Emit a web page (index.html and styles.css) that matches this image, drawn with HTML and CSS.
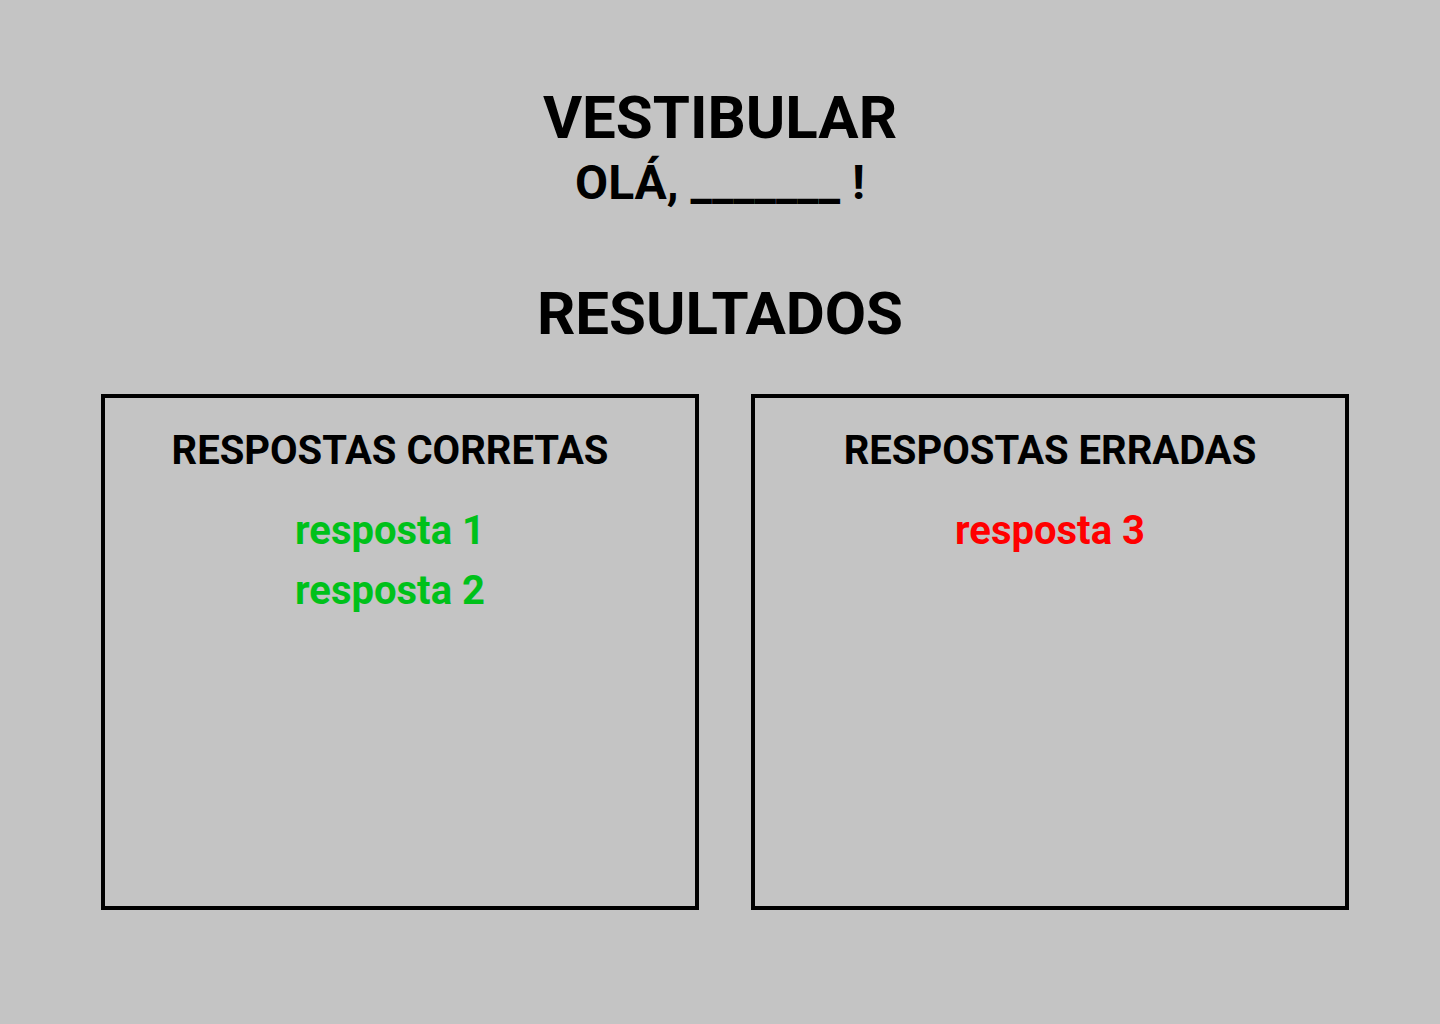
FILE: index.html
```html
<!DOCTYPE html>
<html lang="pt-BR">
  <head>
    <meta charset="utf-8">
    <title>Vestibular - Resultados</title>
    <link rel="stylesheet" href="styles.css">
  </head>

  <body>
    <header class="topo">
      <h1>VESTIBULAR</h1>
      <h2>OLÁ, _______ !</h2>
    </header>

    <h1 class="titulo-resultados">RESULTADOS</h1>

    <main class="resultados">
      <section class="caixa caixa-corretas">
        <h3>RESPOSTAS CORRETAS</h3>
        <ul class="lista corretas">
          <li>resposta 1</li>
          <li>resposta 2</li>
        </ul>
      </section>

      <section class="caixa">
        <h3>RESPOSTAS ERRADAS</h3>
        <ul class="lista erradas">
          <li>resposta 3</li>
        </ul>
      </section>
    </main>
  </body>
</html>
```

FILE: styles.css
```css
body {
  margin: 0;
  background-color: #c4c4c4;
  color: #000;
  font-family: Roboto, "Liberation Sans", Arial, sans-serif;
  font-weight: bold;
}
.topo {
  padding-top: 86px;
  text-align: center;
}
h1 {
  margin: 0;
  font-size: 60px;
  line-height: 64px;
  text-align: center;
}
h2 {
  margin: 9px 0 0;
  font-size: 48px;
  line-height: 48px;
}
.titulo-resultados {
  margin-top: 75px;
}
.resultados {
  display: flex;
  gap: 52px;
  margin-top: 48px;
  padding-left: 101px;
}
.caixa {
  width: 598px;
  height: 516px;
  box-sizing: border-box;
  border: 4px solid #000;
  text-align: center;
  padding-top: 28px;
}
.caixa-corretas {
  padding-right: 20px;
}
.caixa h3 {
  margin: 0;
  font-size: 40px;
  line-height: 50px;
}
.lista {
  list-style: none;
  margin: 25px 0 0;
  padding: 0;
  font-size: 40px;
  line-height: 60px;
}
.corretas {
  color: #00c11a;
}
.erradas {
  color: #ff0000;
}
```
